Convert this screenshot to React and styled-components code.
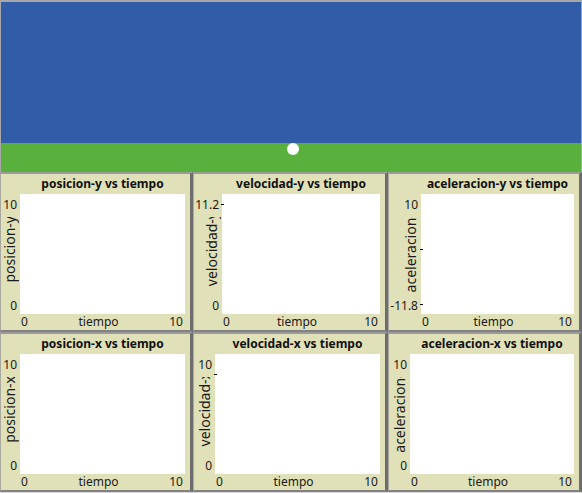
import React from 'react';
import styled, { createGlobalStyle } from 'styled-components';

const GlobalStyle = createGlobalStyle`
  html, body {
    margin: 0;
    padding: 0;
    background: #d8d8d8;
  }
  body {
    font-family: "Noto Sans", "Open Sans", sans-serif;
  }
`;

const Page = styled.div`
  width: 582px;
  display: flex;
  flex-direction: column;
`;

const World = styled.div`
  position: relative;
  height: 172px;
  box-sizing: border-box;
  border-top: 2px solid #a7a7a7;
  border-left: 1px solid #a7a7a7;
  border-right: 1px solid #9aa6c4;
  display: flex;
  flex-direction: column;
`;

const Sky = styled.div`
  flex: 1;
  background: #325ba8;
`;

const Ground = styled.div`
  height: 29px;
  background: #59b03c;
`;

const Ball = styled.div`
  position: absolute;
  left: 286px;
  top: 141px;
  width: 12px;
  height: 12px;
  border-radius: 50%;
  background: #ffffff;
`;

const PlotGrid = styled.div`
  display: grid;
  grid-template-columns: 193px 195px 194px;
  grid-auto-rows: 160px;
`;

const Panel = styled.div`
  box-sizing: border-box;
  background: #e0e0b9;
  border-top: 2px solid #9b9b9b;
  border-left: 1px solid #a9a9a0;
  border-right: 3px solid #6e6e6e;
  border-bottom: 2px solid #828282;
  display: grid;
  grid-template-columns: ${(p) => p.$axis}px 1fr 5px;
  grid-template-rows: 20px 120px 16px;
  color: #1a1a1a;
`;

const Title = styled.div`
  grid-column: 2;
  grid-row: 1;
  text-align: center;
  font-weight: 700;
  font-size: 12px;
  line-height: 20px;
  white-space: nowrap;
  color: #111;
`;

const YAxis = styled.div`
  grid-column: 1;
  grid-row: 2;
  display: grid;
`;

const YNumbers = styled.div`
  grid-area: 1 / 1;
  display: flex;
  flex-direction: column;
  justify-content: space-between;
  align-items: flex-end;
  padding: 3px 3px 0 0;
  font-size: 12px;
  line-height: 16px;
  white-space: nowrap;
`;

/* clipped only at the top: the label is centred a little above the plot middle */
const YLabelClip = styled.div`
  grid-area: 1 / 1;
  box-sizing: border-box;
  margin-top: 23px;
  height: 96px;
  padding: 0 2px 32px 0;
  overflow: hidden;
  display: flex;
  flex-direction: column;
  justify-content: center;
  align-items: flex-end;
`;

const YLabel = styled.div`
  flex-shrink: 0;
  writing-mode: vertical-rl;
  transform: rotate(180deg);
  font-size: 14px;
  line-height: 16px;
  white-space: nowrap;
`;

const PlotArea = styled.div`
  grid-column: 2;
  grid-row: 2;
  background: #ffffff;
  position: relative;
`;

const Points = styled.svg`
  position: absolute;
  left: 0;
  top: 0;
  width: 100%;
  height: 100%;
  overflow: visible;
`;

const XAxis = styled.div`
  grid-column: 2;
  grid-row: 3;
  display: flex;
  justify-content: space-between;
  padding: 0 2px 0 1px;
  font-size: 12px;
  line-height: 16px;
  white-space: nowrap;
`;

const plots = [
  { title: 'posicion-y vs tiempo', label: 'posicion-y', max: '10', min: '0', axis: 19, marks: [] },
  { title: 'velocidad-y vs tiempo', label: 'velocidad-y', max: '11.2', min: '0', axis: 28, marks: [10] },
  { title: 'aceleracion-y vs tiempo', label: 'aceleracion-y', max: '10', min: '-11.8', axis: 32, marks: [55, 110] },
  { title: 'posicion-x vs tiempo', label: 'posicion-x', max: '10', min: '0', axis: 19, marks: [] },
  { title: 'velocidad-x vs tiempo', label: 'velocidad-x', max: '10', min: '0', axis: 21, marks: [20] },
  { title: 'aceleracion-x vs tiempo', label: 'aceleracion-x', max: '10', min: '0', axis: 21, marks: [] },
];

const PlotPanel = ({ plot }) => (
  <Panel $axis={plot.axis}>
    <Title>{plot.title}</Title>
    <YAxis>
      <YLabelClip>
        <YLabel>{plot.label}</YLabel>
      </YLabelClip>
      <YNumbers>
        <span>{plot.max}</span>
        <span>{plot.min}</span>
      </YNumbers>
    </YAxis>
    <PlotArea>
      {plot.marks.length > 0 && (
        <Points>
          {plot.marks.map((y) => (
            <line key={y} x1="-1" y1={y + 0.5} x2="2" y2={y + 0.5} stroke="#000" strokeWidth="1" />
          ))}
        </Points>
      )}
    </PlotArea>
    <XAxis>
      <span>0</span>
      <span>tiempo</span>
      <span>10</span>
    </XAxis>
  </Panel>
);

export default function App() {
  return (
    <Page>
      <GlobalStyle />
      <World>
        <Sky />
        <Ground />
        <Ball />
      </World>
      <PlotGrid>
        {plots.map((plot) => (
          <PlotPanel key={plot.title} plot={plot} />
        ))}
      </PlotGrid>
    </Page>
  );
}
